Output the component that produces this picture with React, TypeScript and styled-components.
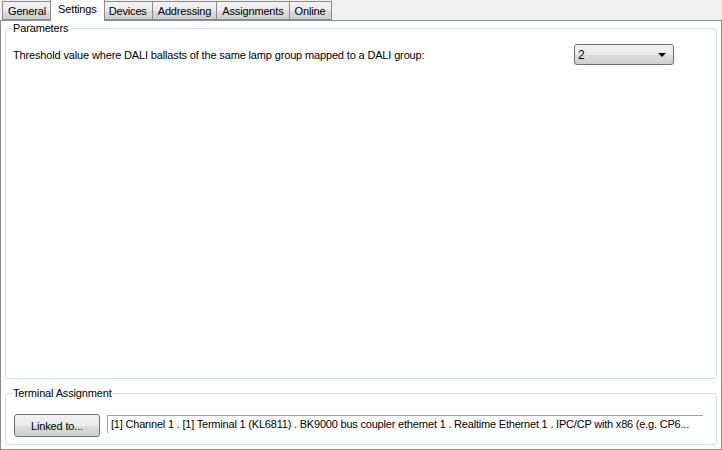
import styled, { createGlobalStyle } from "styled-components";

const GlobalStyle = createGlobalStyle`
  html, body {
    margin: 0;
    padding: 0;
    background: #f0f0f0;
  }
  body {
    font-family: "Liberation Sans", Arial, sans-serif;
    font-size: 11px;
    letter-spacing: -0.15px;
    color: #000;
  }
`;

const tabs = ["General", "Settings", "Devices", "Addressing", "Assignments", "Online"];

const Window = styled.div`
  width: 722px;
  height: 450px;
  display: flex;
  flex-direction: column;
  background: #f0f0f0;
  overflow: hidden;
`;

const TabStrip = styled.div`
  height: 20px;
  display: flex;
  align-items: flex-end;
  padding-left: 2px;
  position: relative;
  z-index: 1;
`;

const Tab = styled.div<{ $active?: boolean }>`
  box-sizing: border-box;
  height: ${(p) => (p.$active ? "22px" : "19px")};
  margin-bottom: ${(p) => (p.$active ? "-1px" : "0")};
  margin-left: ${(p) => (p.$active ? "-2px" : "-1px")};
  margin-right: ${(p) => (p.$active ? "-1px" : "0")};
  padding: 0 ${(p) => (p.$active ? "7px" : "5px")};
  display: flex;
  align-items: ${(p) => (p.$active ? "flex-start" : "center")};
  padding-top: ${(p) => (p.$active ? "3px" : "1px")};
  border: 1px solid #898c95;
  border-bottom: ${(p) => (p.$active ? "none" : "1px solid #898c95")};
  background: ${(p) =>
    p.$active ? "#fff" : "linear-gradient(#f2f2f2 0%, #ebebeb 50%, #dddddd 51%, #cfcfcf 100%)"};
  position: relative;
  z-index: ${(p) => (p.$active ? 2 : 1)};
  white-space: nowrap;
  &:first-child {
    margin-left: 0;
  }
`;

const Panel = styled.div`
  flex: 1;
  box-sizing: border-box;
  border: 1px solid #898c95;
  background: #fff;
  padding: 1px 4px 4px 4px;
  display: flex;
  flex-direction: column;
  min-height: 0;
`;

const Group = styled.fieldset<{ $grow?: boolean }>`
  margin: 0;
  border: 1px solid #d5dfe5;
  border-radius: 3px;
  padding: 0 6px 6px 7px;
  flex: ${(p) => (p.$grow ? 1 : "none")};
  min-width: 0;
  min-height: 0;
`;

const Legend = styled.legend`
  padding: 0 1px;
  margin-left: -1px;
  line-height: 13px;
  color: #000;
`;

const ParamRow = styled.div`
  display: flex;
  align-items: center;
  margin-top: 9px;
  height: 21px;
`;

const Label = styled.span`
  width: 561px;
  flex: none;
`;

const Combo = styled.div`
  box-sizing: border-box;
  width: 100px;
  height: 21px;
  border: 1px solid #707070;
  border-radius: 3px;
  background: linear-gradient(#f2f2f2 0%, #ebebeb 50%, #dddddd 51%, #cfcfcf 100%);
  display: flex;
  align-items: center;
  justify-content: space-between;
  padding: 0 7px 0 3px;
  font-size: 12px;
`;

const Arrow = styled.span`
  width: 0;
  height: 0;
  border-left: 4px solid transparent;
  border-right: 4px solid transparent;
  border-top: 4px solid #000;
  margin-top: 1px;
`;

const Spacer = styled.div`
  height: 8px;
  flex: none;
`;

const AssignRow = styled.div`
  display: flex;
  align-items: flex-start;
  height: 38px;
  padding-top: 14px;
  box-sizing: border-box;
  padding-left: 1px;
`;

const Button = styled.div`
  box-sizing: border-box;
  width: 86px;
  height: 23px;
  border: 1px solid #707070;
  border-radius: 3px;
  background: linear-gradient(#f2f2f2 0%, #ebebeb 50%, #dddddd 51%, #cfcfcf 100%);
  display: flex;
  align-items: center;
  justify-content: center;
  flex: none;
`;

const LinkField = styled.div`
  margin-left: 7px;
  margin-top: 1px;
  box-sizing: border-box;
  width: 596px;
  height: 18px;
  border-top: 1px solid #a0a0a0;
  border-left: 1px solid #a0a0a0;
  padding: 2px 0 0 3px;
  white-space: nowrap;
  font-size: 11px;
  letter-spacing: -0.2px;
`;

export default function App() {
  return (
    <>
      <GlobalStyle />
      <Window>
        <TabStrip>
          {tabs.map((t) => (
            <Tab key={t} $active={t === "Settings"}>
              {t}
            </Tab>
          ))}
        </TabStrip>
        <Panel>
          <Group $grow>
            <Legend>Parameters</Legend>
            <ParamRow>
              <Label>Threshold value where DALI ballasts of the same lamp group mapped to a DALI group:</Label>
              <Combo>
                <span>2</span>
                <Arrow />
              </Combo>
            </ParamRow>
          </Group>
          <Spacer />
          <Group>
            <Legend>Terminal Assignment</Legend>
            <AssignRow>
              <Button>Linked to...</Button>
              <LinkField>
                [1] Channel 1 . [1] Terminal 1 (KL6811) . BK9000 bus coupler ethernet 1 . Realtime Ethernet 1 . IPC/CP with x86 (e.g. CP6...
              </LinkField>
            </AssignRow>
          </Group>
        </Panel>
      </Window>
    </>
  );
}
